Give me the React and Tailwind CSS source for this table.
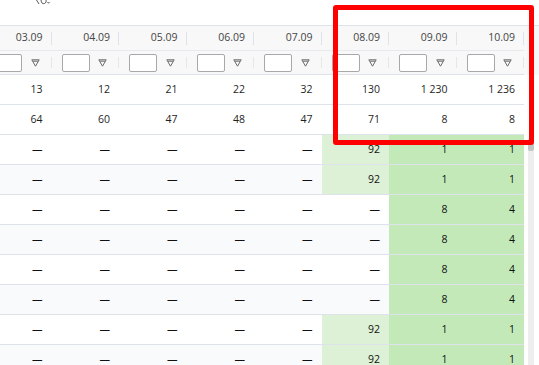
import React from 'react';

const dates = ['03.09', '04.09', '05.09', '06.09', '07.09', '08.09', '09.09', '10.09'];

const pinnedRows = [
    ['13', '12', '21', '22', '32', '130', '1 230', '1 236'],
    ['64', '60', '47', '48', '47', '71', '8', '8'],
];

const D = '—';
const hitRow = [D, D, D, D, D, '92', '1', '1'];
const missRow = [D, D, D, D, D, D, '8', '4'];
const bodyRows = [hitRow, hitRow, missRow, missRow, missRow, missRow, hitRow, hitRow];

const FilterIcon = () => (
    <svg width="9" height="8" viewBox="0 0 9 8" className="shrink-0">
        <path d="M0.8 0.8 H8.2 L4.5 7.2 Z M2 2.2 H7" fill="none" stroke="#6b6b6b" strokeWidth="1" strokeLinejoin="round" />
    </svg>
);

const cellBg = (row, i) => {
    if (i >= 6) return 'bg-[#c3e9b8]';
    if (i === 5 && row[5] !== D) return 'bg-[#ddf1d6]';
    return '';
};

const App = () => {
    return (
        <div className="relative w-[539px] h-[365px] overflow-hidden bg-white font-['Open_Sans','Noto_Sans',sans-serif] text-[10.5px]">
            {/* bit of whatever sits above the grid */}
            <div className="h-[25px] pl-[36px]">
                <svg width="14" height="6" viewBox="0 0 14 6">
                    <path d="M0.5 0 L3 4 M5 0 Q5.5 4.5 8.5 3.5 Q11 2.5 10 0 M11.5 2 Q12.5 4.5 13.5 2" fill="none" stroke="#5a5a5a" strokeWidth="1" />
                </svg>
            </div>

            <div className="border-t border-[#dde2eb]">
                {/* header */}
                <div className="bg-[#f8f8f8] overflow-hidden">
                    <div className="flex h-[25px] border-b border-[#e6e9ee] w-[540px] -ml-[16px]">
                        {dates.map((d) => (
                            <div key={d} className="relative flex items-center justify-end w-[67.5px] shrink-0 pr-[9px] text-[#454545]">
                                {d}
                                <span className="absolute right-0 top-[6px] h-[13px] w-px bg-[#dde2eb]" />
                            </div>
                        ))}
                    </div>
                    <div className="flex h-[24px] border-b border-[#dde2eb] w-[540px] -ml-[16px]">
                        {dates.map((d) => (
                            <div key={d} className="relative flex items-center w-[67.5px] shrink-0 pl-[10px] pr-[12px]">
                                <div className="w-[28px] h-[18px] border border-[#a8a8a8] rounded-[2px] bg-white" />
                                <div className="ml-auto">
                                    <FilterIcon />
                                </div>
                                <span className="absolute right-0 top-[6px] h-[11px] w-px bg-[#e4e7ec]" />
                            </div>
                        ))}
                    </div>
                </div>

                {/* pinned totals */}
                <div className="overflow-hidden">
                    {pinnedRows.map((row, r) => (
                        <div key={r} className="flex h-[30px] border-b border-[#dde2eb] w-[540px] -ml-[16px] text-[#1f1f1f]">
                            {row.map((v, i) => (
                                <div key={i} className="flex items-center justify-end w-[67.5px] shrink-0 pr-[9px]">
                                    {v}
                                </div>
                            ))}
                        </div>
                    ))}
                </div>

                {/* body */}
                <div className="flex">
                    <div className="w-[524px] overflow-hidden">
                        {bodyRows.map((row, r) => (
                            <div
                                key={r}
                                className={`flex h-[30px] border-b border-[#dde2eb] w-[540px] -ml-[16px] text-[#111] ${r % 2 ? 'bg-[#f9fafc]' : 'bg-white'}`}
                            >
                                {row.map((v, i) => (
                                    <div key={i} className={`flex items-center justify-end w-[67.5px] shrink-0 pr-[9px] ${cellBg(row, i)}`}>
                                        {v}
                                    </div>
                                ))}
                            </div>
                        ))}
                    </div>
                    <div className="flex-1 pl-[4px] pt-[4px]">
                        <div className="w-[6px] h-full bg-[#eeeeee] rounded-[2px]">
                            <div className="h-[12px] bg-[#c4c4c4] rounded-[2px]" />
                        </div>
                    </div>
                </div>
            </div>

            {/* highlight drawn over the grid */}
            <div className="absolute left-[333px] top-[5px] w-[201px] h-[140px] border-[5px] border-[#ff0000] rounded-[3px]" />
        </div>
    );
};

export default App;
